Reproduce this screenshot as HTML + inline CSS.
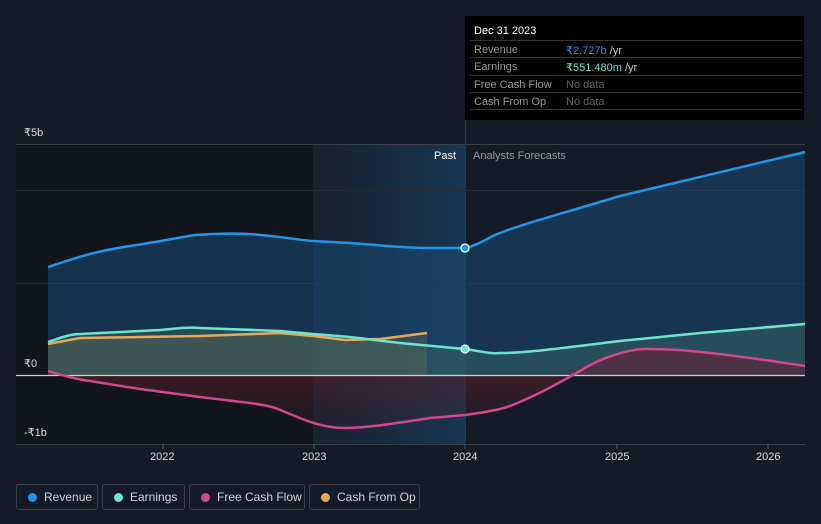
<!DOCTYPE html>
<html><head><meta charset="utf-8"><style>
body{margin:0;width:821px;height:524px;background:#151b26;font-family:"Liberation Sans",sans-serif;overflow:hidden;position:relative}
.tip{position:absolute;left:465px;top:16px;width:339px;height:104px;background:#000;color:#fff;font-size:11px}
.tip .h{position:absolute;left:9px;top:9px;font-size:11px;color:#fff}
.row{position:absolute;left:5px;width:332px;height:17px;border-top:1px solid #333;color:#999;font-size:11px}
.row span{position:absolute;left:4px;top:3px}
.row b{position:absolute;left:96px;top:3px;font-weight:normal;font-size:11px}
.leg{position:absolute;top:484px;height:26px;border:1px solid #3a3f4a;border-radius:3px;color:#cfd3da;font-size:12px;box-sizing:border-box;line-height:24px;padding-left:27px}
.leg i{position:absolute;left:11px;top:8px;width:9px;height:9px;border-radius:50%}
.lbl{position:absolute;color:#ddd;font-size:11px}
</style></head><body>
<svg width="821" height="524" style="position:absolute;left:0;top:0">
<defs>
<linearGradient id="hl" x1="0" x2="1" y1="0" y2="0"><stop offset="0" stop-color="#1a3a55" stop-opacity=".25"/><stop offset="1" stop-color="#1b4a70" stop-opacity=".6"/></linearGradient>
<linearGradient id="neg" x1="0" x2="0" y1="0" y2="1"><stop offset="0" stop-color="#6a2028" stop-opacity=".75"/><stop offset="1" stop-color="#3a1f28" stop-opacity=".25"/></linearGradient>
</defs>
<rect x="16" y="144" width="297" height="300" fill="#11151c"/>
<rect x="313" y="144" width="152" height="300" fill="url(#hl)"/>
<rect x="465" y="120" width="1" height="324" fill="#1e3a55"/>
<line x1="16" y1="144.5" x2="805" y2="144.5" stroke="#3a404b"/>
<line x1="16" y1="190.5" x2="805" y2="190.5" stroke="#262c36"/>
<line x1="16" y1="283.5" x2="805" y2="283.5" stroke="#262c36"/>
<line x1="16" y1="444.5" x2="805" y2="444.5" stroke="#3a404b"/>
<path d="M48,267 C70,260 90,252 130,246 C150,243 160,241 195,235 C220,233 250,233 270,236 C290,238 300,240 313,241 L350,243 C380,245 400,248 430,248 L465,248 C480,245 490,236 500,233 C520,225 540,220 620,196 L805,152 L805,375 L48,375Z" fill="#1a4a75" fill-opacity=".55"/>
<path d="M48,342 C60,338 70,334 80,334 L160,330 C180,328 190,327 200,328 L280,331 L313,334 L350,337 L400,343 L465,349 C480,351 490,354 500,353 C520,353 540,351 620,341 L700,333 L805,324 L805,375 L48,375Z" fill="#3c6b66" fill-opacity=".45"/>
<path d="M48,344 L80,338 L200,336 L280,333 L313,336 L345,340 L380,339 L427,333 L427,375 L48,375Z" fill="#6a6a50" fill-opacity=".35"/>
<path d="M48,371 C60,375 80,380 90,381 L140,389 L200,397 L250,403 C265,405 275,407 285,412 C300,418 320,428 345,428 C360,428 380,426 430,418 L465,415 C480,413 500,410 510,406 C530,398 545,391 580,371 C600,358 630,348 650,349 C680,349 720,353 805,366 L805,375 L48,375Z" fill="url(#neg)"/>
<path d="M560,375 C590,360 620,349 650,349 C680,349 720,353 805,366 L805,375Z" fill="#4a3550" fill-opacity=".5"/>
<line x1="16" y1="375.5" x2="805" y2="375.5" stroke="#d0d0d0" stroke-width="1.2"/>
<path d="M48,267 C70,260 90,252 130,246 C150,243 160,241 195,235 C220,233 250,233 270,236 C290,238 300,240 313,241 L350,243 C380,245 400,248 430,248 L465,248 C480,245 490,236 500,233 C520,225 540,220 620,196 L805,152" fill="none" stroke="#2394e6" stroke-width="2.5"/>
<path d="M48,344 L80,338 L200,336 L280,333 L313,336 L345,340 L380,339 L427,333" fill="none" stroke="#e6a95a" stroke-width="2.5"/>
<path d="M48,342 C60,338 70,334 80,334 L160,330 C180,328 190,327 200,328 L280,331 L313,334 L350,337 L400,343 L465,349 C480,351 490,354 500,353 C520,353 540,351 620,341 L700,333 L805,324" fill="none" stroke="#6de3d0" stroke-width="2.5"/>
<path d="M48,371 C60,375 80,380 90,381 L140,389 L200,397 L250,403 C265,405 275,407 285,412 C300,418 320,428 345,428 C360,428 380,426 430,418 L465,415 C480,413 500,410 510,406 C530,398 545,391 580,371 C600,358 630,348 650,349 C680,349 720,353 805,366" fill="none" stroke="#d2478d" stroke-width="2.5"/>
<circle cx="465" cy="248" r="4" fill="#2394e6" stroke="#fff" stroke-width="1.3"/>
<circle cx="465" cy="349" r="4" fill="#6de3d0" stroke="#fff" stroke-width="1.3"/>
<g stroke="#555"><line x1="163" y1="444" x2="163" y2="449"/><line x1="314" y1="444" x2="314" y2="449"/><line x1="465" y1="444" x2="465" y2="449"/><line x1="617" y1="444" x2="617" y2="449"/><line x1="768" y1="444" x2="768" y2="449"/></g>
</svg>
<div class="lbl" style="left:24px;top:126px">₹5b</div>
<div class="lbl" style="left:24px;top:357px">₹0</div>
<div class="lbl" style="left:24px;top:426px">-₹1b</div>
<div class="lbl" style="left:434px;top:150px;color:#fff">Past</div>
<div class="lbl" style="left:473px;top:150px;color:#999">Analysts Forecasts</div>
<div class="lbl" style="left:150px;top:451px">2022</div>
<div class="lbl" style="left:302px;top:451px">2023</div>
<div class="lbl" style="left:453px;top:451px">2024</div>
<div class="lbl" style="left:605px;top:451px">2025</div>
<div class="lbl" style="left:756px;top:451px">2026</div>
<div class="tip">
<div class="h">Dec 31 2023</div>
<div class="row" style="top:24px"><span>Revenue</span><b style="color:#2394e6">₹2.727b <span style="position:static;color:#ccc">/yr</span></b></div>
<div class="row" style="top:41px"><span>Earnings</span><b style="color:#6de3d0">₹551.480m <span style="position:static;color:#ccc">/yr</span></b></div>
<div class="row" style="top:59px"><span>Free Cash Flow</span><b style="color:#666">No data</b></div>
<div class="row" style="top:76px"><span>Cash From Op</span><b style="color:#666">No data</b></div>
<div style="position:absolute;left:5px;top:93px;width:332px;border-top:1px solid #333"></div>
</div>
<div class="leg" style="left:16px;width:82px"><i style="background:#2394e6"></i>Revenue</div>
<div class="leg" style="left:102px;width:83px"><i style="background:#6de3d0"></i>Earnings</div>
<div class="leg" style="left:189px;width:116px"><i style="background:#d2478d"></i>Free Cash Flow</div>
<div class="leg" style="left:309px;width:111px"><i style="background:#e6a95a"></i>Cash From Op</div>
</body></html>
